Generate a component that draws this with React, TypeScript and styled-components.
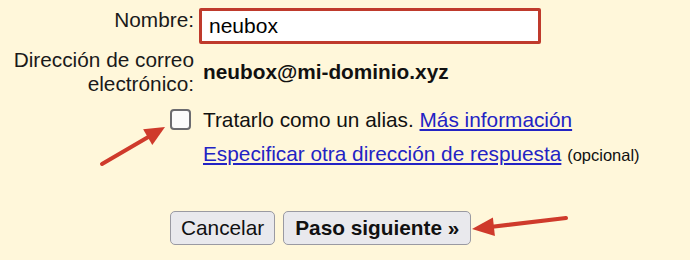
import React from 'react'
import styled, { createGlobalStyle } from 'styled-components'

const GlobalStyle = createGlobalStyle`
	html, body {
		margin: 0;
		padding: 0;
		background: #fff7da;
	}
	body {
		font-family: 'Liberation Sans', Arial, Helvetica, sans-serif;
		color: #111;
	}
`

export default function App() {
	return (
		<>
			<GlobalStyle />
			<Page>
				<Form>
					<FieldRow>
						<Label>Nombre:</Label>
						<NameInput defaultValue="neubox" />
					</FieldRow>
					<FieldRow $mt={4} $center>
						<Label>
							Dirección de correo
							<br />
							electrónico:
						</Label>
						<Value $bold>neubox@mi-dominio.xyz</Value>
					</FieldRow>
					<FieldRow $mt={13} $center>
						<CheckCell>
							<CheckBox type="checkbox" />
						</CheckCell>
						<Value>
							Tratarlo como un alias. <Link href="#">Más información</Link>
						</Value>
					</FieldRow>
					<FieldRow $mt={10}>
						<span />
						<Value>
							<Link href="#">Especificar otra dirección de respuesta</Link> <Hint>(opcional)</Hint>
						</Value>
					</FieldRow>
					<ButtonRow>
						<Button>Cancelar</Button>
						<Button $primary>Paso siguiente »</Button>
					</ButtonRow>
				</Form>
				<Annotations width="690" height="260" viewBox="0 0 690 260">
					<g stroke="#cf3a2b" strokeWidth="4" strokeLinecap="round" fill="#cf3a2b">
						<line x1="102" y1="164" x2="150" y2="136" />
						<polygon points="165,127 152.3,145 143.1,129.3" stroke="none" />
						<line x1="566" y1="218" x2="490" y2="227" />
						<polygon points="472,229 494.9,236 492.9,217.5" stroke="none" />
					</g>
				</Annotations>
			</Page>
		</>
	)
}

const Page = styled.div`
	position: relative;
	width: 690px;
	height: 260px;
	overflow: hidden;
	padding-top: 8px;
	box-sizing: border-box;
`

const Form = styled.div`
	display: flex;
	flex-direction: column;
	font-size: 20.8px;
	line-height: 23.5px;
`

const FieldRow = styled.div<{ $mt?: number; $center?: boolean }>`
	display: grid;
	grid-template-columns: 194px 1fr;
	column-gap: 5px;
	align-items: ${({ $center }) => ($center ? 'center' : 'start')};
	margin-top: ${({ $mt }) => $mt || 0}px;
`

const Label = styled.div`
	text-align: right;
	color: #1a1a1a;
`

const Value = styled.div<{ $bold?: boolean }>`
	padding-left: 4px;
	font-weight: ${({ $bold }) => ($bold ? 700 : 400)};
	white-space: nowrap;
`

const NameInput = styled.input`
	width: 342px;
	height: 36px;
	box-sizing: border-box;
	border: 3px solid #bf3a2c;
	border-radius: 2px;
	background: #fff;
	padding: 0 7px;
	font-family: 'Liberation Sans', Arial, sans-serif;
	font-size: 21px;
	color: #000;
	outline: none;
`

const CheckCell = styled.div`
	display: flex;
	justify-content: flex-end;
	padding-right: 3px;
`

const CheckBox = styled.input`
	appearance: none;
	margin: 0;
	width: 21px;
	height: 21px;
	box-sizing: border-box;
	border: 2px solid #6b6b70;
	border-radius: 4px;
	background: #fbfbfc;
`

const Link = styled.a`
	color: #2323c4;
	text-decoration: underline;
`

const Hint = styled.span`
	font-size: 16.5px;
	color: #111;
`

const ButtonRow = styled.div`
	display: flex;
	gap: 8px;
	padding-left: 170px;
	margin-top: 44px;
`

const Button = styled.button<{ $primary?: boolean }>`
	height: 34px;
	padding: 0 ${({ $primary }) => ($primary ? '11px' : '10px')};
	font-family: 'Liberation Sans', Arial, sans-serif;
	font-size: 20.8px;
	font-weight: ${({ $primary }) => ($primary ? 700 : 400)};
	color: #111;
	background: #e9e9ed;
	border: 1px solid #9a9aa2;
	border-radius: 5px;
`

const Annotations = styled.svg`
	position: absolute;
	left: 0;
	top: 0;
	pointer-events: none;
`
